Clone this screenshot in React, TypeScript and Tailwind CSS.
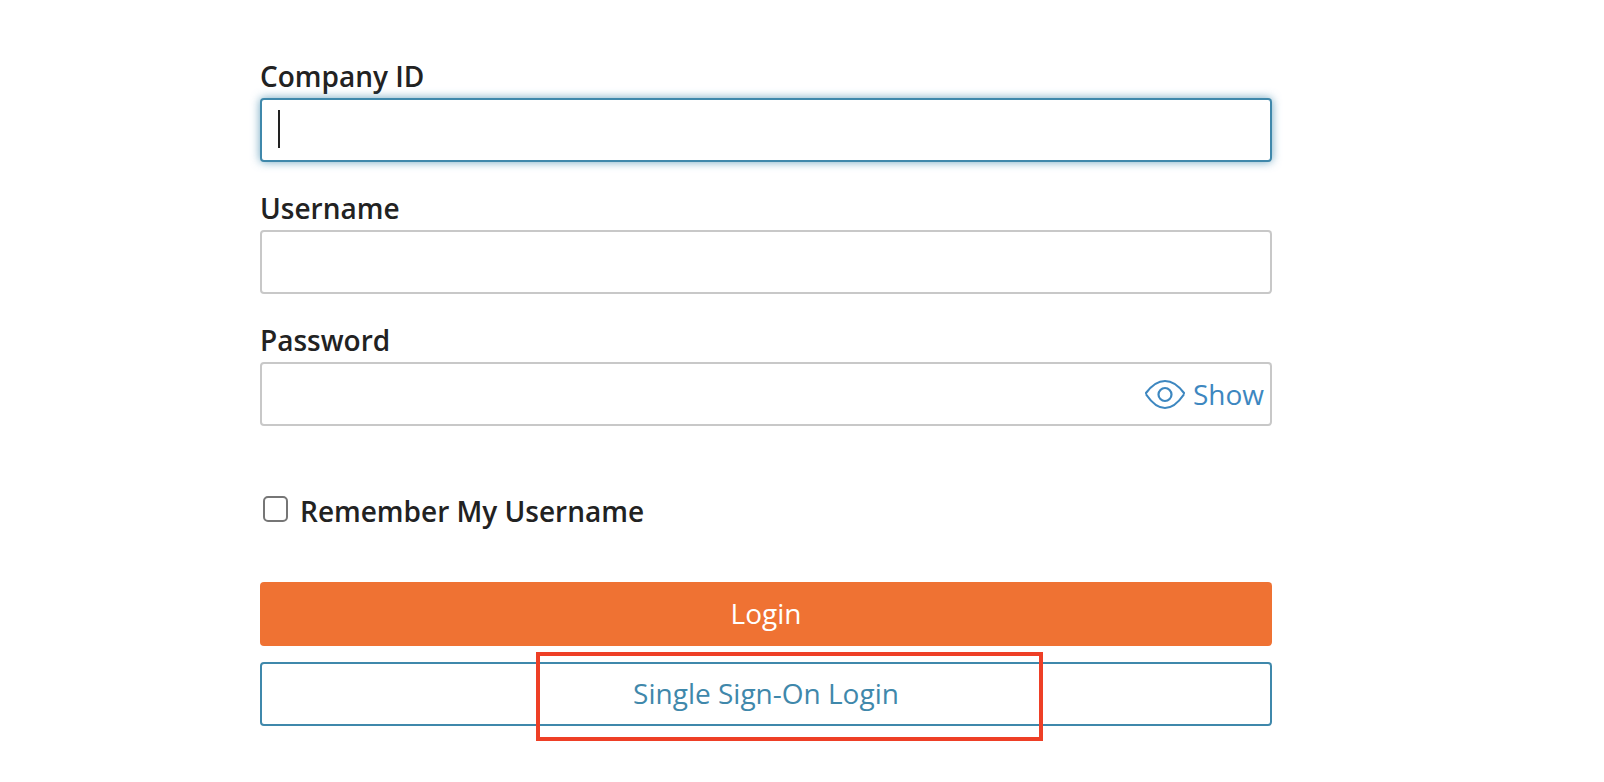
const font = "font-['Open_Sans',sans-serif]";

function EyeIcon() {
  return (
    <svg width="40" height="32" viewBox="0 0 40 32" fill="none" stroke="#3d87c0" strokeWidth="2.2" strokeLinecap="round">
      <path d="M1 15 C7 7 13 3 20 3 C27 3 33 7 39 15" />
      <path d="M1.500 17 C7 25 13 30 20 30 C27 30 33 25 38.500 17" />
      <circle cx="20" cy="16.500" r="6.500" />
    </svg>
  );
}

function Field({ label, focused, children }: { label: string; focused?: boolean; children?: React.ReactNode }) {
  return (
    <div className="flex flex-col">
      <label className="h-[40px] text-[28px] leading-[36px] font-semibold text-[#222222]">{label}</label>
      <div
        className={
          focused
            ? "flex h-[64px] items-center rounded-[4px] border-2 border-[#3f88ab] bg-white pl-[16px] shadow-[0_0_10px_rgba(63,136,171,0.75)]"
            : "flex h-[64px] items-center justify-end rounded-[4px] border-2 border-[#c8c8c8] bg-white pr-[6px]"
        }
      >
        {children}
      </div>
    </div>
  );
}

export default function App() {
  return (
    <div className={`relative h-[782px] w-full overflow-hidden bg-white ${font}`}>
      <div className="ml-[260px] flex w-[1012px] flex-col pt-[58px]">
        <div className="flex flex-col gap-[28px]">
          <Field label="Company ID" focused>
            <span className="mb-[3px] h-[38px] w-[2px] bg-[#222222]" />
          </Field>
          <Field label="Username" />
          <Field label="Password">
            <div className="flex items-center gap-[8px] text-[28px] text-[#3d87c0]">
              <EyeIcon />
              <span>Show</span>
            </div>
          </Field>
        </div>

        <div className="mt-[65px] flex h-[36px] items-center pl-[3px]">
          <span className="h-[26px] w-[25px] rounded-[5px] border-2 border-[#767676] bg-white" />
          <span className="ml-[12px] pt-[4px] text-[28px] leading-[36px] font-semibold text-[#222222]">Remember My Username</span>
        </div>

        <button className="mt-[55px] h-[64px] rounded-[4px] bg-[#ef7233] pb-[2px] text-[28px] text-white">Login</button>
        <button className="mt-[16px] h-[64px] rounded-[4px] border-2 border-[#3f88ab] bg-white pb-[2px] text-[28px] text-[#3f88ab]">
          Single Sign-On Login
        </button>
      </div>

      {/* annotation box drawn over the screenshot */}
      <div className="absolute top-[652px] left-[536px] h-[89px] w-[507px] border-[4px] border-[#ee3f26]" />
    </div>
  );
}
